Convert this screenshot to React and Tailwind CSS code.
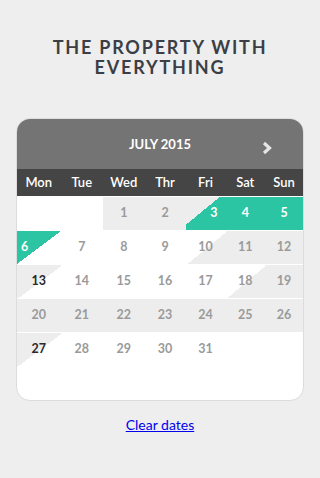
import React from "react";

// kind of each day cell, row by row (Mon..Sun)
const cells = [
  [null, "blank"], [null, "blank"], [1, "off"], [2, "off"], [3, "checkin"], [4, "teal"], [5, "teal"],
  [6, "checkout"], [7, "free"], [8, "free"], [9, "free"], [10, "offStart"], [11, "off"], [12, "off"],
  [13, "offEnd"], [14, "free"], [15, "free"], [16, "free"], [17, "free"], [18, "offStart"], [19, "off"],
  [20, "off"], [21, "off"], [22, "off"], [23, "off"], [24, "off"], [25, "off"], [26, "off"],
  [27, "offEnd"], [28, "free"], [29, "free"], [30, "free"], [31, "free"], [null, "blank"], [null, "blank"],
];

const styleFor = {
  blank: "bg-white",
  free: "bg-white text-[#9a9a9a]",
  off: "bg-[#ededed] text-[#9a9a9a]",
  teal: "bg-[#2cc5a3] text-white",
  checkin: "bg-[linear-gradient(to_bottom_right,#ededed_42%,#2cc5a3_42%)] text-white justify-end pr-[8px]",
  checkout: "bg-[linear-gradient(to_bottom_right,#2cc5a3_50%,#ffffff_50%)] text-white justify-start pl-[4px]",
  offStart: "bg-[linear-gradient(to_bottom_right,#ffffff_52%,#ededed_52%)] text-[#9a9a9a]",
  offEnd: "bg-[linear-gradient(to_bottom_right,#ededed_52%,#ffffff_52%)] text-[#2b2b2b]",
};

const days = ["Mon", "Tue", "Wed", "Thr", "Fri", "Sat", "Sun"];

function Chevron() {
  return (
    <svg width="12" height="14" viewBox="0 0 12 14">
      <polyline points="3,2 8.5,7 3,12" fill="none" stroke="#e6e6e6" strokeWidth="3.2" strokeLinejoin="miter" />
    </svg>
  );
}

export default function App() {
  return (
    <div className="min-h-[478px] w-[320px] bg-[#eeeeee] pt-[37px] font-['Lato','Liberation_Sans',sans-serif]">
      <h1 className="text-center text-[18px] font-bold leading-[20px] tracking-[0.1em] text-[#3b3f45]">
        THE PROPERTY WITH<br />EVERYTHING
      </h1>

      <div className="mx-[16px] mt-[41px] overflow-hidden rounded-[14px] border border-[#dcdcdc] bg-white">
        <div className="relative flex h-[50px] items-center justify-center bg-[#747474] pt-[2px]">
          <span className="text-[13px] font-bold text-white">JULY 2015</span>
          <span className="absolute right-[30px] top-[22px]"><Chevron /></span>
        </div>
        <div className="grid h-[27px] grid-cols-[43.5px_42.5px_41.5px_41px_40px_39.5px_1fr] bg-[#454545]">
          {days.map((d) => (
            <div key={d} className="flex items-center justify-center text-[13px] font-semibold text-white">
              {d}
            </div>
          ))}
        </div>
        <div className="grid grid-cols-[43.5px_42.5px_41.5px_41px_40px_39.5px_1fr] gap-y-px pt-px">
          {cells.map(([n, k], i) => (
            <div
              key={i}
              className={`flex h-[33px] items-center justify-center text-[12.5px] font-bold ${styleFor[k]}`}
            >
              {n}
            </div>
          ))}
        </div>
        <div className="h-[34px]" />
      </div>

      <div className="mt-[11px] text-center">
        <a href="#" className="text-[14px] text-[#0000ee] underline">Clear dates</a>
      </div>
    </div>
  );
}
